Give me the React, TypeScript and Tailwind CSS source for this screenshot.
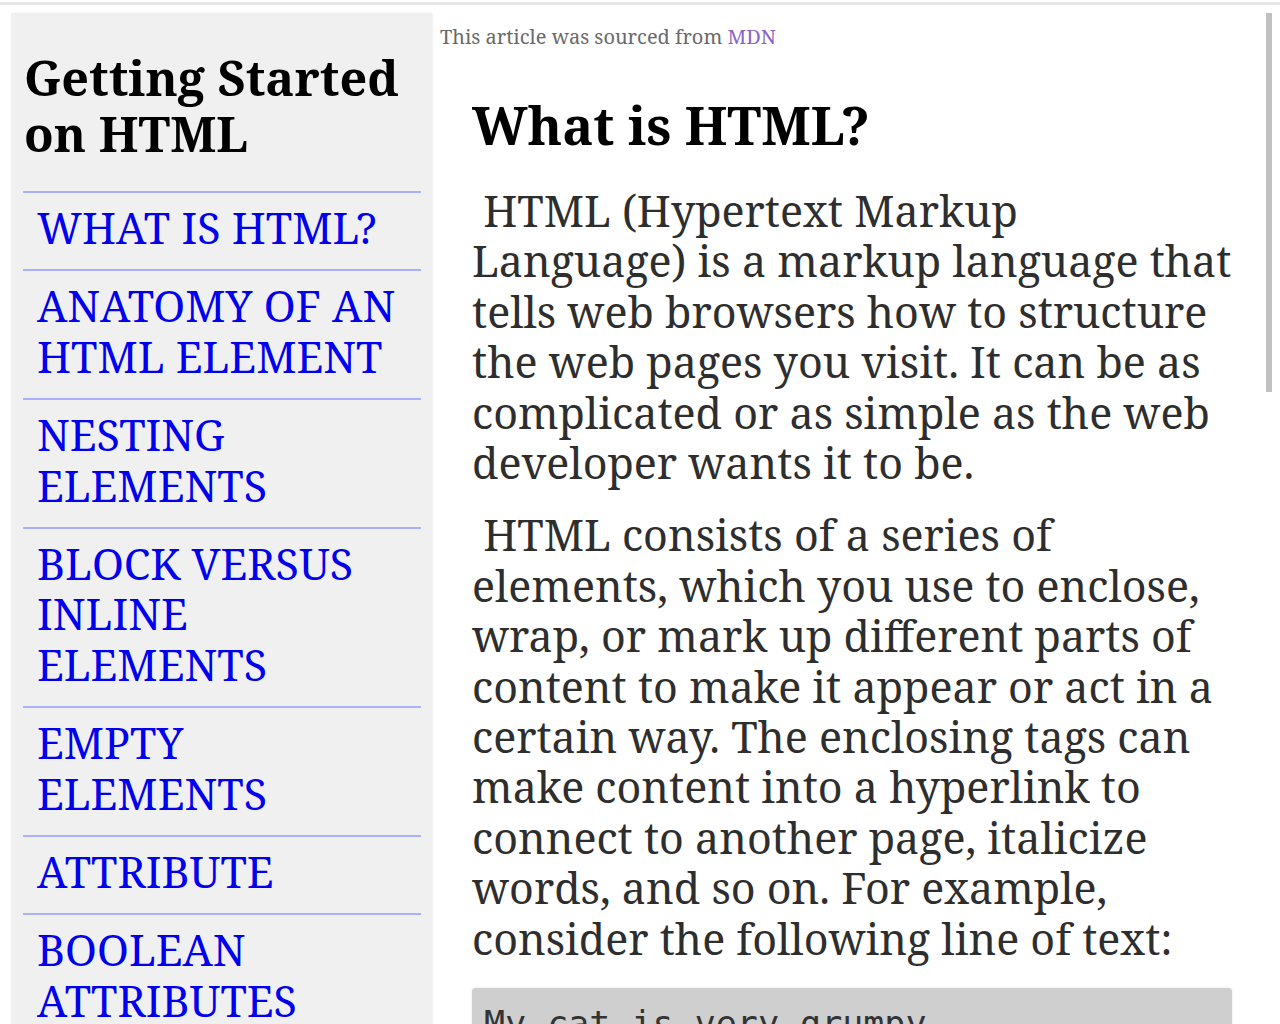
const sections = [
  ["WHAT IS HTML?"],
  ["ANATOMY OF AN", "HTML ELEMENT"],
  ["NESTING", "ELEMENTS"],
  ["BLOCK VERSUS", "INLINE", "ELEMENTS"],
  ["EMPTY", "ELEMENTS"],
  ["ATTRIBUTE"],
  ["BOOLEAN", "ATTRIBUTES"],
  ["OMITTING", "QUOTES"],
];

const serif = "font-['Noto_Serif','Droid_Serif','DejaVu_Serif',serif]";

export default function App() {
  return (
    <div className={`h-[1024px] overflow-hidden bg-white ${serif}`}>
      <div className="mt-[2px] h-[3px] bg-[#e8e8e8]" />
      <div className="flex pl-[11px] pt-[8px]">
        <aside className="h-[1100px] w-[421px] shrink-0 bg-[#f0f0f0] pl-[12px] pr-[11px] shadow-[1px_0_2px_rgba(0,0,0,0.06)]">
          <h2 className="ml-[1px] pt-[36px] pb-[30px] text-[48.5px] font-bold leading-[56px] text-black">
            Getting Started on HTML
          </h2>
          <nav>
            {sections.map((lines) => (
              <a
                key={lines.join(" ")}
                href="#"
                className="block border-t-[2px] border-[#aab0ff] pt-[10px] pb-[16px] pl-[14px] text-[43px] leading-[50.4px] text-[#0000ee]"
              >
                {lines.map((l) => (
                  <span key={l} className="block">
                    {l}
                  </span>
                ))}
              </a>
            ))}
          </nav>
        </aside>
        <main className="flex-1 pl-[8px]">
          <p className="pt-[12px] text-[20px] leading-[24px] text-[#6a6a6a]">
            This article was sourced from <a href="#" className="text-[#8a63c8]">MDN</a>
          </p>
          <div className="pl-[32px] pr-[32px]">
            <h1 className="pt-[46px] pb-[31px] text-[52px] font-bold leading-[60px] text-black">
              What is HTML?
            </h1>
            <p className="pb-[22px] text-[43px] leading-[50.4px] text-[#2e2e2e]">
              &nbsp;HTML (Hypertext Markup Language) is a markup language that tells web browsers how to structure the web pages you visit. It can be as complicated or as simple as the web developer wants it to be.
            </p>
            <p className="pb-[24px] text-[43px] leading-[50.4px] text-[#2e2e2e]">
              &nbsp;HTML consists of a series of elements, which you use to enclose, wrap, or mark up different parts of content to make it appear or act in a certain way. The enclosing tags can make content into a hyperlink to connect to another page, italicize words, and so on. For example, consider the following line of text:
            </p>
            <pre className="rounded-[4px] bg-[#cfcfcf] px-[12px] pt-[14px] pb-[14px] font-['DejaVu_Sans_Mono',monospace] text-[35px] leading-[44px] text-[#333] shadow-[0_0_2px_rgba(0,0,0,0.15)]">
              My cat is very grumpy
            </pre>
          </div>
        </main>
        <div className="ml-[2px] mr-[8px] w-[6px] shrink-0">
          <div className="h-[379px] bg-[#c0c0c0]" />
        </div>
      </div>
    </div>
  );
}
